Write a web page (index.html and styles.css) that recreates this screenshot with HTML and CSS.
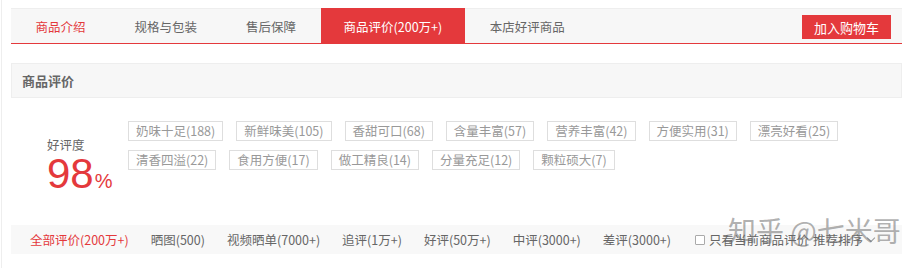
FILE: index.html
```html
<!DOCTYPE html>
<html lang="zh-CN">
<head>
<meta charset="utf-8">
<title>商品评价</title>
<link rel="stylesheet" href="styles.css">
</head>
<body>
<div class="wrap">
  <div class="tabbar">
    <div class="tabs">
      <span class="tab first">商品介绍</span>
      <span class="tab">规格与包装</span>
      <span class="tab">售后保障</span>
      <span class="tab active">商品评价(200万+)</span>
      <span class="tab">本店好评商品</span>
    </div>
    <span class="cart-btn">加入购物车</span>
  </div>

  <div class="sec-head">商品评价</div>

  <div class="rate">
    <div class="score">
      <div class="score-label">好评度</div>
      <div class="score-num">98<span class="pct">%</span></div>
    </div>
    <div class="tags">
      <div class="tag-row">
        <span class="tag">奶味十足(188)</span>
        <span class="tag">新鲜味美(105)</span>
        <span class="tag">香甜可口(68)</span>
        <span class="tag">含量丰富(57)</span>
        <span class="tag">营养丰富(42)</span>
        <span class="tag">方便实用(31)</span>
        <span class="tag">漂亮好看(25)</span>
      </div>
      <div class="tag-row">
        <span class="tag">清香四溢(22)</span>
        <span class="tag">食用方便(17)</span>
        <span class="tag">做工精良(14)</span>
        <span class="tag">分量充足(12)</span>
        <span class="tag">颗粒硕大(7)</span>
      </div>
    </div>
  </div>

  <div class="filter">
    <span class="f-item current">全部评价(200万+)</span>
    <span class="f-item">晒图(500)</span>
    <span class="f-item">视频晒单(7000+)</span>
    <span class="f-item">追评(1万+)</span>
    <span class="f-item">好评(50万+)</span>
    <span class="f-item">中评(3000+)</span>
    <span class="f-item">差评(3000+)</span>
    <span class="f-check"><span class="box"></span>只看当前商品评价</span>
    <span class="f-sort">推荐排序<span class="chev"></span></span>
  </div>

  <div class="watermark">知乎 @七米哥</div>
</div>
</body>
</html>
```

FILE: styles.css
```css
* { box-sizing: border-box; }

body {
  margin: 0;
  background: #fff;
  font-family: "Microsoft YaHei", "Noto Sans CJK SC", "Noto Sans", sans-serif;
  font-size: 12.5px;
  color: #666;
}

.wrap {
  position: relative;
  margin-left: 1px;
  border-left: 1px solid #eee;
  padding: 8px 0 0 9px;
  height: 268px;
}

.tabbar {
  width: 891px;
  height: 36px;
  display: flex;
  align-items: center;
  justify-content: space-between;
  background: #f7f7f7;
  border-top: 1px solid #eee;
  border-bottom: 1px solid #e4393c;
}

.tabs {
  display: flex;
  height: 100%;
  align-self: stretch;
}

.tab {
  display: flex;
  align-items: center;
  padding: 0 24.5px;
  color: #666;
  white-space: nowrap;
}

.tab.first { color: #e4393c; }

.tab.active {
  background: #e4393c;
  color: #fff;
  margin-top: -1px;
  margin-bottom: -1px;
  padding: 0 23px;
}

.cart-btn {
  width: 89px;
  height: 24px;
  margin-right: 11px;
  margin-top: 2px;
  background: #e4393c;
  color: #fff;
  display: flex;
  align-items: center;
  justify-content: center;
  font-size: 13px;
}

.sec-head {
  width: 891px;
  height: 35px;
  margin-top: 19px;
  background: #f7f7f7;
  border: 1px solid #eee;
  padding-left: 10px;
  display: flex;
  align-items: center;
  font-weight: bold;
  font-size: 13px;
  color: #666;
}

.rate {
  height: 127px;
  display: flex;
  padding-top: 23px;
}

.score {
  width: 117px;
  padding-left: 36px;
  padding-top: 16px;
}

.score-label {
  line-height: 16px;
  color: #666;
}

.score-num {
  font-family: "Liberation Sans", Arial, sans-serif;
  font-size: 42px;
  line-height: 42px;
  color: #e4393c;
  white-space: nowrap;
}

.pct {
  font-size: 20px;
  margin-left: 1px;
}

.tags {
  display: flex;
  flex-direction: column;
  gap: 9px;
}

.tag-row {
  display: flex;
  gap: 13px;
}

.tag {
  height: 20px;
  line-height: 18px;
  padding: 0 7px;
  border: 1px solid #dedede;
  color: #999;
  white-space: nowrap;
}

.filter {
  width: 891px;
  height: 29px;
  background: #f8f8f8;
  display: flex;
  align-items: center;
  padding-left: 19px;
  white-space: nowrap;
}

.f-item {
  margin-right: 22px;
  color: #666;
}

.f-item.current { color: #e4393c; }

.f-check {
  display: flex;
  align-items: center;
  margin-left: 2px;
  color: #666;
}

.box {
  width: 10px;
  height: 10px;
  border: 1px solid #aaa;
  border-radius: 1px;
  background: #fff;
  margin-right: 4px;
}

.f-sort {
  display: flex;
  align-items: center;
  margin-left: 4px;
  color: #666;
}

.chev {
  width: 6px;
  height: 6px;
  border-right: 1px solid #999;
  border-bottom: 1px solid #999;
  transform: rotate(45deg);
  margin: -3px 0 0 5px;
}

.watermark {
  position: absolute;
  left: 726px;
  top: 214px;
  font-size: 28px;
  line-height: 32px;
  color: rgba(110, 110, 110, 0.55);
  white-space: nowrap;
  pointer-events: none;
}
```
